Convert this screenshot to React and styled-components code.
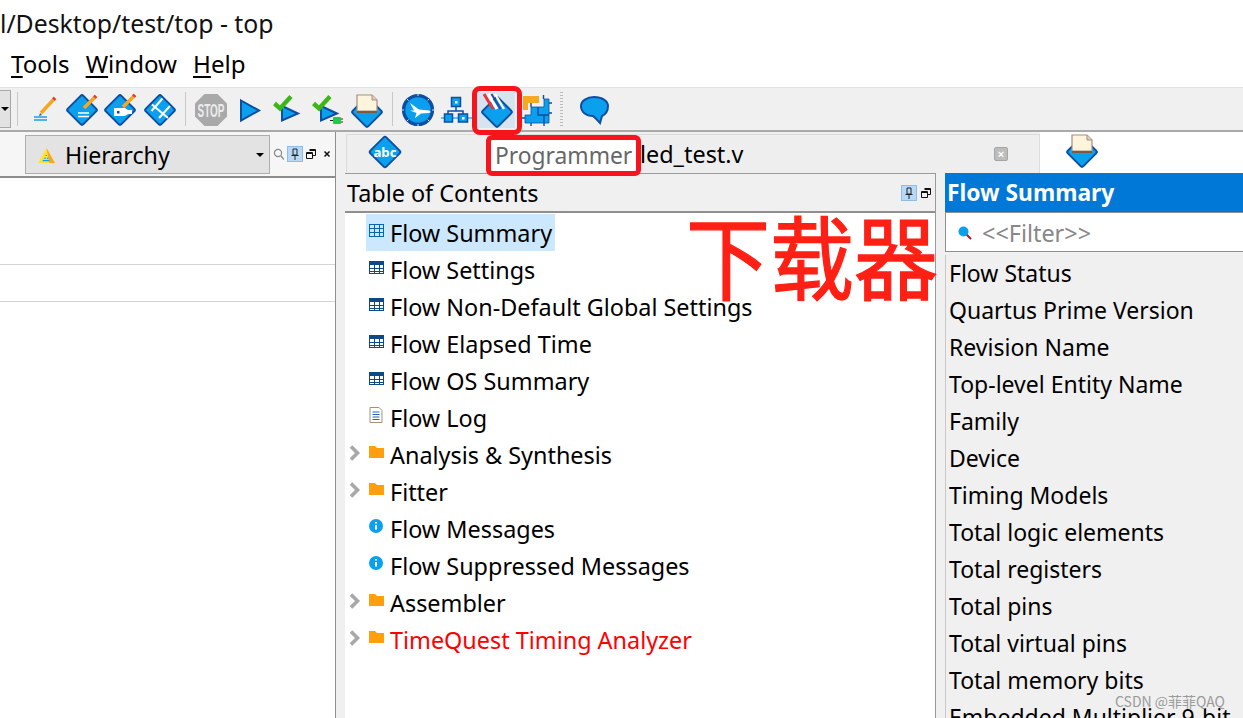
import React from "react";
import styled, { createGlobalStyle } from "styled-components";

const Global = createGlobalStyle`
  html, body { margin: 0; padding: 0; background: #fff; }
  body { width: 1243px; height: 718px; overflow: hidden; font-family: "Noto Sans", "Open Sans", sans-serif; color: #000; }
  #root { width: 1243px; height: 718px; }
`;
const Page = styled.div`position: relative; width: 1243px; height: 718px; overflow: hidden; display: flex; flex-direction: column; font-size: 23.4px;`;
const TitleBar = styled.div`height: 44px; line-height: 46px; font-size: 24.8px; white-space: nowrap; flex: none; color: #111;`;
const MenuBar = styled.div`height: 44px; display: flex; gap: 16px; padding: 0 0 4px 11px; align-items: center; flex: none; font-size: 24.1px; border-bottom: 1px solid #e4e4e4; box-sizing: border-box; u { text-underline-offset: 3px; }`;
const Toolbar = styled.div`height: 44px; flex: none; background: #f0f0f0; display: flex; align-items: center; border-bottom: 2px solid #a9a9a9; box-sizing: border-box;`;
const Stub = styled.div`width: 11px; height: 38px; background: #e2e2e2; border: 1px solid #a8a8a8; border-left: 0; box-sizing: border-box; display: flex; align-items: center; justify-content: flex-end; padding-right: 1px; &::after { content: ""; border: 4px solid transparent; border-top: 4px solid #000; border-bottom: 0; }`;
const Sep = styled.div`width: ${p => p.$dotted ? 3 : 1}px; height: 34px; margin-left: ${p => p.$l}px; margin-right: ${p => p.$r}px; ${p => p.$dotted ? "background: repeating-linear-gradient(#bbb 0 1px, transparent 1px 3px);" : "background: #c8c8c8;"}`;
const Slot = styled.div`width: 38px; height: 36px; flex: none; margin-left: ${p => p.$l || 0}px; margin-top: 2px; display: flex; align-items: center; justify-content: center; background: ${p => p.$active ? "#d6e4f0" : "transparent"};`;
const Main = styled.div`flex: 1; display: flex; min-height: 0;`;
const LeftPanel = styled.div`width: 336px; flex: none; border-right: 1px solid #8f8f8f; box-sizing: border-box; display: flex; flex-direction: column;`;
const LeftHeader = styled.div`height: 46px; flex: none; border-bottom: 2px solid #8c8c8c; box-sizing: border-box; display: flex; align-items: center; padding-left: 25px; background: #f6f6f6;`;
const Combo = styled.div`width: 245px; height: 39px; background: #e3e3e3; border: 1px solid #adadad; box-sizing: border-box; display: flex; align-items: center; padding: 2px 5px 0 12px; gap: 10px; flex: none; font-size: 23.2px;`;
const Caret = styled.div`margin-left: auto; border: 4px solid transparent; border-top: 4px solid #000; border-bottom: 0;`;
const MiniTools = styled.div`display: flex; align-items: center; gap: ${p => p.$g || 3}px; margin-left: ${p => p.$l || 0}px;`;
const PinBox = styled.div`width: 16px; height: 16px; background: #b9d8f3; border: 1px solid #8ebde8; box-sizing: border-box; display: flex; align-items: center; justify-content: center;`;
const LeftBody = styled.div`flex: 1; background: #fff;`;
const LeftRow = styled.div`height: 37px; border-bottom: 1px solid #d4d4d4; box-sizing: border-box; margin-top: ${p => p.$t || 0}px;`;
const Gutter = styled.div`width: 9px; flex: none; background: #f0f0f0;`;
const Work = styled.div`flex: 1; display: flex; flex-direction: column; min-width: 0; background: #f0f0f0;`;
const TabBar = styled.div`height: 41px; flex: none; display: flex;`;
const Tab = styled.div`width: 694px; margin-left: 1px; margin-top: 2px; background: #eee; border: 1px solid #dcdcdc; border-bottom: 0; box-sizing: border-box; display: flex; align-items: center; position: relative; white-space: nowrap;`;
const TabIcon = styled.div`margin-left: 21px; width: 34px; display: flex; height: 34px; margin-top: -4px;`;
const TabName = styled.span`margin-left: 238px; width: 104px; line-height: 1; padding-top: 2px;`;
const CloseBtn = styled.div`margin-left: 250px; width: 14px; height: 14px; border-radius: 2px; background: #bdbdbd; border: 1px solid #a5a5a5; box-sizing: border-box; color: #fff; font: bold 11px/12px "Liberation Sans", sans-serif; text-align: center;`;
const ActiveTab = styled.div`flex: 1; background: #fff; display: flex; padding-left: 24px; box-sizing: border-box;`;
const Panes = styled.div`flex: 1; display: flex; gap: 9px; min-height: 0;`;
const Toc = styled.div`width: 591px; flex: none; background: #fff; border: 1px solid #9a9a9a; border-width: 1px 1px 0 0; box-sizing: border-box; display: flex; flex-direction: column;`;
const TocHeader = styled.div`height: 39px; flex: none; background: #f0f0f0; border-bottom: 2px solid #8f8f8f; box-sizing: border-box; display: flex; align-items: center; padding-left: 2px; `;
const Tree = styled.div`padding-top: 1px;`;
const Row = styled.div`height: 37px; display: flex; align-items: center; white-space: nowrap; color: ${p => p.$red ? "#f00" : "#000"};`;
const Arrow = styled.div`width: 21px; flex: none; display: flex; justify-content: center; padding-right: 1px; box-sizing: border-box; margin-top: -3px;`;
const NodeIcon = styled.div`width: 24px; padding-left: 3px; height: 16px; box-sizing: border-box; flex: none; display: flex; align-items: center; justify-content: flex-start; margin-top: -5px;`;
const NodeBox = styled.div`display: flex; align-items: center; height: 37px; padding-right: 3px; background: ${p => p.$sel ? "#cce8ff" : "transparent"};`;
const Side = styled.div`flex: 1; display: flex; flex-direction: column; min-width: 0;`;
const SideHead = styled.div`height: 39px; flex: none; background: #0078d7; color: #fff; font-weight: 700; font-size: 22.8px; display: flex; align-items: center; padding-left: 2px; white-space: nowrap;`;
const Filter = styled.div`height: 40px; flex: none; background: #fff; border: 1px solid #8f8f8f; border-width: 1px 0 1px 1px; box-sizing: border-box; display: flex; align-items: center; padding: 1px 0 0 12px; gap: 10px; color: #888;`;
const SideList = styled.div`margin-top: 3px; padding: 0 0 0 3px; flex: 1; border-left: 1px solid #c8c8c8; overflow: hidden; white-space: nowrap; font-size: 23px;`;
const SideRow = styled.div`height: 37px; line-height: 37px;`;
const RedBox = styled.div`position: absolute; left: 472px; top: 86px; width: 50px; height: 49px; border: 5px solid #f8141c; border-radius: 8px; box-sizing: border-box; pointer-events: none;`;
const Tip = styled.div`position: absolute; left: 486px; top: 135px; width: 155px; height: 41px; background: #fff; border: 5px solid #f8141c; border-radius: 6px; box-sizing: border-box; color: #666; display: flex; align-items: center; padding-left: 4px; font-size: 22.8px; white-space: nowrap;`;
const BigLabel = styled.div`position: absolute; left: 686px; top: 200px; font: 400 84px/1.2 "Noto Sans CJK SC", sans-serif; -webkit-text-stroke: 1.2px #ff2015; color: #ff2015; white-space: nowrap; transform: scale(1, 1.08); transform-origin: left top;`;
const Mark = styled.div`position: absolute; left: 1115px; top: 692px; font: 14px/18px "Noto Sans CJK SC", sans-serif; color: #8d8d8d; opacity: .85; white-space: nowrap;`;

const Diamond = ({ children, cy = 18, half = 11 }) => (
  <svg width="36" height="36" viewBox="0 0 36 36">
    <rect x={18 - half} y={cy - half} width={half * 2} height={half * 2} rx="2" transform={`rotate(45 18 ${cy})`} fill="#0aa0ee" stroke="#0d4ea0" strokeWidth="2" />
    {children}
  </svg>
);
const Tilted = ({ x1, y1, x2, y2 }) => (
  <g>
    <line x1={x1} y1={y1} x2={x2} y2={y2} stroke="#f5a623" strokeWidth="3.6" />
    <line x1={x2 - 1.6} y1={y2 + 1.6} x2={x2} y2={y2} stroke="#e8353b" strokeWidth="3.6" />
  </g>
);
const Pencil = () => (
  <svg width="36" height="36" viewBox="0 0 36 36">
    <Tilted x1={15} y1={21} x2={29} y2={6} />
    <path d="M14 21L13 24L16 23Z" fill="#555" />
    <path d="M8 25H21M8 28H21" stroke="#12a0ee" strokeWidth="1.3" />
  </svg>
);
const DiamondEdit = () => (
  <Diamond>
    <path d="M14 21H25M14 24.5H25" stroke="#fff" strokeWidth="1.3" />
    <Tilted x1={20} y1={16} x2={32} y2={4} />
  </Diamond>
);
const DiamondPlug = () => (
  <Diamond>
    <path d="M12 16H23L26 18H30V22H26L23 24H12Z" fill="#fff" />
    <rect x="15" y="19" width="2.5" height="2.5" fill="#0d4ea0" />
    <Tilted x1={21} y1={15} x2={33} y2={3} />
  </Diamond>
);
const DiamondCross = () => (
  <Diamond>
    <path d="M10 12.5L26 26M9.5 19L20.5 6.5M17 26L28 14" stroke="#fff" strokeWidth="2" fill="none" />
  </Diamond>
);
const Stop = () => (
  <svg width="36" height="36" viewBox="0 0 36 36">
    <path d="M11.5 2H24.5L34 11.5V24.5L24.5 34H11.5L2 24.5V11.5Z" fill="#a9a9a9" />
    <text x="18" y="24.5" textAnchor="middle" fontFamily="Liberation Sans, sans-serif" fontWeight="700" fontSize="18" fill="#ececec" textLength="27" lengthAdjust="spacingAndGlyphs">STOP</text>
  </svg>
);
const Play = () => (
  <svg width="36" height="36" viewBox="0 0 36 36">
    <path d="M10 8.5L28 18.5L10 28.5Z" fill="#0aa0ee" stroke="#0d4ea0" strokeWidth="2" />
  </svg>
);
const Check = ({ dx }) => <path transform={`translate(${dx} 0)`} d="M5.5 11.5L11 16.5L22 4.5" fill="none" stroke="#3fb618" strokeWidth="4.4" />;
const PlayCheck = () => (
  <svg width="36" height="36" viewBox="0 0 36 36">
    <path d="M13 14L29 21.5L13 28.5Z" fill="#0aa0ee" stroke="#0d4ea0" strokeWidth="2" />
    <Check dx={0} />
  </svg>
);
const PlayCheckPlug = () => (
  <svg width="36" height="36" viewBox="0 0 36 36">
    <path d="M14 14L30 21.5L14 28.5Z" fill="#0aa0ee" stroke="#0d4ea0" strokeWidth="2" />
    <Check dx={1} />
    <rect x="26" y="25" width="8" height="7" rx="1" fill="#22c84a" />
    <path d="M23 28.5H26M34 27H36M34 30H36" stroke="#222" strokeWidth="1" />
  </svg>
);
const Doc = () => (
  <g>
    <path d="M8 3H23L28 8V19H8Z" fill="#fdf4dd" stroke="#a68f7c" strokeWidth="1.2" />
    <path d="M23 3V8H28" fill="#e0d2bd" stroke="#a68f7c" />
    <path d="M8 20H28" stroke="#7a5c46" strokeWidth="2" />
  </g>
);
const DiamondDoc = () => (
  <Diamond cy={20}><Doc /></Diamond>
);
const Clock = () => (
  <svg width="36" height="36" viewBox="0 0 36 36">
    <circle cx="18" cy="18" r="14.4" fill="#0aa0ee" stroke="#0d4ea0" strokeWidth="3.4" />
    <path d="M18 2V4M18 32V34M2 18H4M32 18H34M7 7L8.5 8.5M29 7L27.5 8.5M7 29L8.5 27.5M29 29L27.5 27.5" stroke="#cfe8fa" strokeWidth="1" />
    <path d="M10 11L19 17.5L29 18.5Q32 20 29 21L21 21.5L15 26L16.5 21L10 18.5L14 18.5Z" fill="#fff" />
  </svg>
);
const Net = () => (
  <svg width="36" height="36" viewBox="0 0 36 36">
    <path d="M2 26H34" stroke="#6fbbe8" strokeWidth="2" />
    <path d="M17 15V19M9 22V19H24V22" fill="none" stroke="#0d4ea0" strokeWidth="1.5" />
    <rect x="12.5" y="5.5" width="9" height="9" fill="#0aa0ee" stroke="#0d4ea0" strokeWidth="1.5" />
    <rect x="5.5" y="22" width="8" height="8" fill="#0aa0ee" stroke="#0d4ea0" strokeWidth="1.5" />
    <rect x="19.5" y="22" width="9" height="8" fill="#0aa0ee" stroke="#0d4ea0" strokeWidth="1.5" />
    <rect x="16" y="9" width="2.5" height="2.5" fill="#fff" />
    <rect x="23" y="25" width="2.5" height="2.5" fill="#fff" />
  </svg>
);
const ProgIcon = () => (
  <svg width="36" height="36" viewBox="0 0 36 36">
    <rect x="8" y="9" width="22" height="22" rx="2" transform="rotate(45 19 20)" fill="#0aa0ee" stroke="#0d4ea0" strokeWidth="2" />
    <path d="M6 2L15 17" stroke="#e8353b" strokeWidth="3" />
    <path d="M10 2L19 17" stroke="#fff" strokeWidth="3" />
    <path d="M13.5 2L22.5 17" stroke="#26459b" strokeWidth="1.8" />
    <path d="M17 2L26 17" stroke="#fff" strokeWidth="2.4" />
  </svg>
);
const Chip = () => (
  <svg width="36" height="36" viewBox="0 0 36 36">
    <path d="M4 4H20V11H9V18H4Z" fill="#f7a823" />
    <path d="M6 23H12V15H25V7H30V31H6Z" fill="#0aa0ee" />
    <path d="M6 23H12V15H25V7H30V31H6Z" fill="none" stroke="#0d4ea0" strokeWidth=".8" />
    <path d="M19 15V23H30M25 23V31M24.5 3V7M30 11H33M30 21H33M12 11V15M12 31V34M25 31V34M2 26H6" stroke="#0d4ea0" strokeWidth="1.4" fill="none" />
  </svg>
);
const Bubble = () => (
  <svg width="36" height="36" viewBox="0 0 36 36">
    <path d="M5 14C5 9 11 5 18 5C26 5 32 9 32 14C32 20 28 23 26 24L24 31C21 28 19 25 17 24C10 24 5 20 5 14Z" fill="#0aa0ee" stroke="#0d4ea0" strokeWidth="2" />
  </svg>
);
const Abc = () => (
  <svg width="34" height="34" viewBox="0 0 36 36">
    <rect x="6" y="6" width="24" height="24" rx="2" transform="rotate(45 18 18)" fill="#0aa0ee" stroke="#0d4ea0" strokeWidth="2" />
    <text x="18" y="23" textAnchor="middle" fontFamily="Noto Sans, sans-serif" fontWeight="700" fontSize="14" fill="#fff">abc</text>
  </svg>
);
const Pin = () => (
  <svg width="10" height="12" viewBox="0 0 10 12"><path d="M3 1H7V7H3ZM1.5 7.5H8.5M5 8V12" fill="none" stroke="#222" strokeWidth="1" /></svg>
);
const Restore = () => (
  <svg width="10" height="10" viewBox="0 0 10 10"><path d="M3.5 .5H9.5V6.5H7M.5 3.5H6.5V9.5H.5ZM.5 4.5H6.5M3.5 1.5H9.5" fill="none" stroke="#111" strokeWidth="1" /></svg>
);
const Search = () => (
  <svg width="11" height="12" viewBox="0 0 11 12"><circle cx="5" cy="5" r="3.6" fill="none" stroke="#888" strokeWidth="1.2" /><path d="M8 8L11 11.5" stroke="#888" strokeWidth="1.4" /></svg>
);
const Xmark = () => (
  <svg width="12" height="8" viewBox="-4 0 12 8"><path d="M1.5 1.5L6.5 6.5M6.5 1.5L1.5 6.5" stroke="#111" strokeWidth="1.5" /></svg>
);
const HierIcon = () => (
  <svg width="17" height="15" viewBox="0 0 18 16">
    <path d="M9 0L18 16H0Z" fill="#ffe234" />
    <path d="M9 0L18 16H12Z" fill="#f7a823" />
    <path d="M8 8H9.5M6.5 11H8M9.5 11H11M5 13.5H12" stroke="#0aa0ee" strokeWidth="1.2" />
  </svg>
);
const TableIcon = ({ sel }) => (
  <svg width="15" height="13" viewBox="0 0 15 13">
    <rect x=".5" y=".5" width="14" height="12" fill={sel ? "#cce8ff" : "#fff"} stroke={sel ? "#0d63ad" : "#0b4a85"} />
    {!sel && <rect x="0" y="0" width="15" height="4" fill="#0b4a85" />}
    <path d={sel ? "M0 4.5H15M0 8.5H15M5.5 1V12M10.5 1V12" : "M0 7.5H15M0 10.5H15M5.5 4V12M10.5 4V12"} stroke={sel ? "#0d63ad" : "#0b4a85"} strokeWidth="1" />
  </svg>
);
const LogIcon = () => (
  <svg width="14" height="16" viewBox="0 0 14 16">
    <path d="M1 .5H10L13 3.5V15.5H1Z" fill="#fff" stroke="#a68f7c" />
    <path d="M3.5 5H10.5M3.5 7.5H10.5M3.5 10H10.5M3.5 12.5H10.5" stroke="#2a63ad" />
  </svg>
);
const Folder = () => (
  <svg width="15" height="12" viewBox="0 0 15 12"><path d="M0 0H6L8 2H15V12H0Z" fill="#ff9f0f" /></svg>
);
const Info = () => (
  <svg width="14" height="14" viewBox="0 0 14 14">
    <circle cx="7" cy="7" r="7" fill="#0aa0ee" />
    <path d="M7 3V4.6M7 6V10.6" stroke="#fff" strokeWidth="2" />
  </svg>
);
const Chevron = () => (
  <svg width="12" height="16" viewBox="0 0 12 16"><path d="M2 1.5L8.5 8L2 14.5" fill="none" stroke="#a8a8a8" strokeWidth="3.6" /></svg>
);
const FilterIcon = () => (
  <svg width="14" height="14" viewBox="0 0 14 14">
    <path d="M8 8L13 13" stroke="#b3122a" strokeWidth="2" />
    <circle cx="5.5" cy="5.5" r="5" fill="#0aa0ee" />
  </svg>
);

const toc = [
  { t: "Flow Summary", i: <TableIcon sel />, sel: true },
  { t: "Flow Settings", i: <TableIcon /> },
  { t: "Flow Non-Default Global Settings", i: <TableIcon /> },
  { t: "Flow Elapsed Time", i: <TableIcon /> },
  { t: "Flow OS Summary", i: <TableIcon /> },
  { t: "Flow Log", i: <LogIcon /> },
  { t: "Analysis & Synthesis", i: <Folder />, arrow: true },
  { t: "Fitter", i: <Folder />, arrow: true },
  { t: "Flow Messages", i: <Info /> },
  { t: "Flow Suppressed Messages", i: <Info /> },
  { t: "Assembler", i: <Folder />, arrow: true },
  { t: "TimeQuest Timing Analyzer", i: <Folder />, arrow: true, red: true },
];
const summary = ["Flow Status", "Quartus Prime Version", "Revision Name", "Top-level Entity Name", "Family", "Device", "Timing Models", "Total logic elements", "Total registers", "Total pins", "Total virtual pins", "Total memory bits", "Embedded Multiplier 9-bit"];

export default function App() {
  return (
    <Page>
      <Global />
      <TitleBar>l/Desktop/test/top - top</TitleBar>
      <MenuBar>
        <span><u>T</u>ools</span><span><u>W</u>indow</span><span><u>H</u>elp</span>
      </MenuBar>
      <Toolbar>
        <Stub />
        <Sep $l={6} $r={7} />
        <Slot><Pencil /></Slot>
        <Slot><DiamondEdit /></Slot>
        <Slot><DiamondPlug /></Slot>
        <Slot $l={2}><DiamondCross /></Slot>
        <Sep $l={6} $r={6} />
        <Slot><Stop /></Slot>
        <Slot><Play /></Slot>
        <Slot><PlayCheck /></Slot>
        <Slot><PlayCheckPlug /></Slot>
        <Slot $l={4}><DiamondDoc /></Slot>
        <Sep $l={6} $r={6} />
        <Slot><Clock /></Slot>
        <Slot $l={1}><Net /></Slot>
        <Slot $l={1} $active><ProgIcon /></Slot>
        <Slot $l={3}><Chip /></Slot>
        <Sep $l={4} $r={12} $dotted />
        <Slot><Bubble /></Slot>
      </Toolbar>
      <Main>
        <LeftPanel>
          <LeftHeader>
            <Combo>
              <HierIcon />
              <span>Hierarchy</span>
              <Caret />
            </Combo>
            <MiniTools $l={3}>
              <Search /><PinBox><Pin /></PinBox><Restore /><Xmark />
            </MiniTools>
          </LeftHeader>
          <LeftBody>
            <LeftRow $t={50} />
            <LeftRow />
          </LeftBody>
        </LeftPanel>
        <Gutter />
        <Work>
          <TabBar>
            <Tab>
              <TabIcon><Abc /></TabIcon>
              <TabName>led_test.v</TabName>
              <CloseBtn>×</CloseBtn>
            </Tab>
            <ActiveTab><DiamondDoc /></ActiveTab>
          </TabBar>
          <Panes>
            <Toc>
              <TocHeader>
                <span>Table of Contents</span>
                <MiniTools $l={363} $g={4}><PinBox><Pin /></PinBox><Restore /></MiniTools>
              </TocHeader>
              <Tree>
                {toc.map(r => (
                  <Row key={r.t} $red={r.red}>
                    <Arrow>{r.arrow && <Chevron />}</Arrow>
                    <NodeBox $sel={r.sel}>
                      <NodeIcon>{r.i}</NodeIcon>
                      <span>{r.t}</span>
                    </NodeBox>
                  </Row>
                ))}
              </Tree>
            </Toc>
            <Side>
              <SideHead>Flow Summary</SideHead>
              <Filter><FilterIcon /><span>&lt;&lt;Filter&gt;&gt;</span></Filter>
              <SideList>
                {summary.map(s => <SideRow key={s}>{s}</SideRow>)}
              </SideList>
            </Side>
          </Panes>
        </Work>
      </Main>
      <RedBox />
      <Tip>Programmer</Tip>
      <BigLabel>下载器</BigLabel>
      <Mark>CSDN @菲菲QAQ</Mark>
    </Page>
  );
}
